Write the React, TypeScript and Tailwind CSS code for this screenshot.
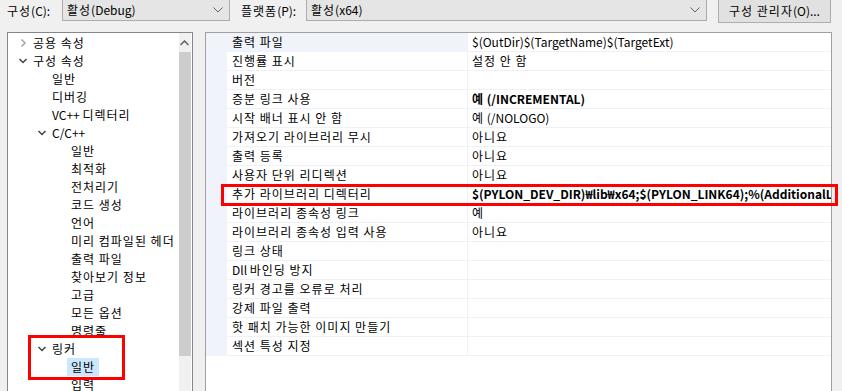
import React from "react";

const font = { fontFamily: '"Noto Sans CJK KR", "Noto Sans", sans-serif' };

// Hangul in the reference font is a little wider; widen Hangul runs only
const kr = (text: string) =>
  text.split(/([가-힣]+(?:\s+[가-힣]+)*)/).map((part, i) =>
    /[가-힣]/.test(part) ? (
      <span key={i} className="tracking-[1px]">
        {part}
      </span>
    ) : (
      <React.Fragment key={i}>{part}</React.Fragment>
    )
  );

type Node = { label: string; level: number; chevron?: "open" | "closed"; selected?: boolean };

const tree: Node[] = [
  { label: "공용 속성", level: 0, chevron: "closed" },
  { label: "구성 속성", level: 0, chevron: "open" },
  { label: "일반", level: 1 },
  { label: "디버깅", level: 1 },
  { label: "VC++ 디렉터리", level: 1 },
  { label: "C/C++", level: 1, chevron: "open" },
  { label: "일반", level: 2 },
  { label: "최적화", level: 2 },
  { label: "전처리기", level: 2 },
  { label: "코드 생성", level: 2 },
  { label: "언어", level: 2 },
  { label: "미리 컴파일된 헤더", level: 2 },
  { label: "출력 파일", level: 2 },
  { label: "찾아보기 정보", level: 2 },
  { label: "고급", level: 2 },
  { label: "모든 옵션", level: 2 },
  { label: "명령줄", level: 2 },
  { label: "링커", level: 1, chevron: "open" },
  { label: "일반", level: 2, selected: true },
  { label: "입력", level: 2 },
];

const props: { name: string; value: string; bold?: boolean }[] = [
  { name: "출력 파일", value: "$(OutDir)$(TargetName)$(TargetExt)" },
  { name: "진행률 표시", value: "설정 안 함" },
  { name: "버전", value: "" },
  { name: "증분 링크 사용", value: "예 (/INCREMENTAL)", bold: true },
  { name: "시작 배너 표시 안 함", value: "예 (/NOLOGO)" },
  { name: "가져오기 라이브러리 무시", value: "아니요" },
  { name: "출력 등록", value: "아니요" },
  { name: "사용자 단위 리디렉션", value: "아니요" },
  {
    name: "추가 라이브러리 디렉터리",
    value: "$(PYLON_DEV_DIR)₩lib₩x64;$(PYLON_LINK64);%(AdditionalLibraryDirectories)",
    bold: true,
  },
  { name: "라이브러리 종속성 링크", value: "예" },
  { name: "라이브러리 종속성 입력 사용", value: "아니요" },
  { name: "링크 상태", value: "" },
  { name: "Dll 바인딩 방지", value: "" },
  { name: "링커 경고를 오류로 처리", value: "" },
  { name: "강제 파일 출력", value: "" },
  { name: "핫 패치 가능한 이미지 만들기", value: "" },
  { name: "섹션 특성 지정", value: "" },
];

const Chevron = ({ kind }: { kind: "open" | "closed" }) =>
  kind === "open" ? (
    <svg width="10" height="10" viewBox="0 0 10 10">
      <polyline points="1.5,3 5,6.5 8.5,3" fill="none" stroke="#404040" strokeWidth="1.5" />
    </svg>
  ) : (
    <svg width="10" height="10" viewBox="0 0 10 10">
      <polyline points="3.5,1.5 7,5 3.5,8.5" fill="none" stroke="#a6a6a6" strokeWidth="1.5" />
    </svg>
  );

const Combo = ({ text, width }: { text: string; width: string }) => (
  <div
    className={`flex items-center justify-between h-[23px] -mt-[2px] border border-[#acacac] bg-[#e5e5e5] pl-[4px] pr-[6px] ${width}`}
  >
    <span className="text-[12px] text-black">{kr(text)}</span>
    <svg width="10" height="6" viewBox="0 0 10 6">
      <polyline points="0.5,0.5 5,5 9.5,0.5" fill="none" stroke="#606060" strokeWidth="1" />
    </svg>
  </div>
);

export default function App() {
  return (
    <div
      className="relative w-[842px] h-[391px] overflow-hidden bg-[#f0f0f0] text-[12px] text-black"
      style={font}
    >
      {/* top bar */}
      <div className="flex items-start h-[32px]">
        <span className="ml-[7px] mt-[2px] w-[55px] leading-[18px]">{kr("구성(C):")}</span>
        <Combo text="활성(Debug)" width="w-[168px]" />
        <span className="ml-[11px] mt-[2px] w-[65px] leading-[18px]">{kr("플랫폼(P):")}</span>
        <Combo text="활성(x64)" width="w-[401px]" />
        <div className="ml-[11px] -mt-[2px] w-[113px] h-[25px] border border-[#adadad] bg-[#e1e1e1] flex items-center justify-center">
          {kr("구성 관리자(O)...")}
        </div>
      </div>

      <div className="flex h-[359px]">
        {/* tree */}
        <div className="ml-[7px] w-[186px] h-[380px] border border-[#828790] bg-white flex">
          <div className="flex-1 pt-[1px]">
            {tree.map((n, i) => (
              <div key={i} className="flex items-center h-[18px] whitespace-nowrap">
                <div
                  className={`flex items-center justify-center w-[10px] ${
                    n.level === 0 ? "ml-[10px]" : n.level === 1 ? "ml-[29px]" : "ml-[48px]"
                  }`}
                >
                  {n.chevron && <Chevron kind={n.chevron} />}
                </div>
                <span
                  className={`ml-[1px] px-[4px] leading-[18px] ${
                    n.selected ? "bg-[#cce8ff]" : ""
                  }`}
                >
                  {kr(n.label)}
                </span>
              </div>
            ))}
          </div>
          <div className="w-[16px] bg-[#f0f0f0] flex flex-col mr-[1px]">
            <div className="h-[19px] flex items-center justify-center">
              <svg width="9" height="6" viewBox="0 0 9 6">
                <polyline points="0.5,5 4.5,1 8.5,5" fill="none" stroke="#606060" strokeWidth="1.5" />
              </svg>
            </div>
            <div className="h-[304px] bg-[#cdcdcd]" />
          </div>
        </div>

        {/* property grid */}
        <div className="ml-[12px] w-[627px] h-[380px] border border-[#a0a0a0] bg-white flex">
          <div className="w-[21px] h-[323px] bg-[#f0f4fa]" />
          <div className="flex-1 min-w-0">
            {props.map((p, i) => (
              <div key={i} className="flex h-[19px] border-b border-[#eef2f8]">
                <div
                  className={`w-[241px] pl-[5px] leading-[18px] whitespace-nowrap border-r border-[#eef2f8] ${
                    i === 0 ? "bg-[#f0f4fa]" : ""
                  }`}
                >
                  {kr(p.name)}
                </div>
                <div
                  className={`flex-1 min-w-0 pl-[4px] leading-[18px] whitespace-nowrap overflow-hidden ${
                    p.bold ? "font-bold" : ""
                  }`}
                >
                  {kr(p.value)}
                </div>
              </div>
            ))}
          </div>
        </div>
      </div>

      {/* annotation boxes */}
      <div className="absolute left-[221px] top-[184px] w-[617px] h-[22px] border-[3px] border-[#ff0000]" />
      <div className="absolute left-[28px] top-[335px] w-[97px] h-[45px] border-[3px] border-[#ff0000]" />
    </div>
  );
}
